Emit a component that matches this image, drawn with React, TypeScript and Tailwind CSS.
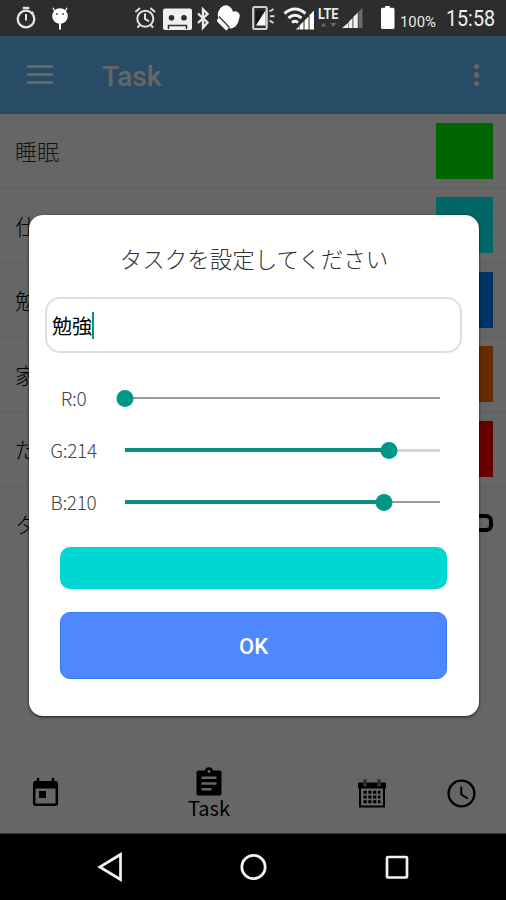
import type { ReactNode } from 'react'

const tasks = [
  { name: '睡眠', color: 'bg-[#00ff00]', text: 'text-[#333333]' },
  { name: '仕事', color: 'bg-[#00ffff]', text: 'text-black' },
  { name: '勉強', color: 'bg-[#0080ff]', text: 'text-black' },
  { name: '家事', color: 'bg-[#ff6600]', text: 'text-black' },
  { name: 'だらだら', color: 'bg-[#ff0000]', text: 'text-black' },
]

const channels = [
  { label: 'R', value: 0, track: 'h-[1.5px] bg-[#999999]' },
  { label: 'G', value: 214, track: 'h-[3px] bg-[#d6d6d6]' },
  { label: 'B', value: 210, track: 'h-[1.5px] bg-[#999999]' },
]

function StatusBar() {
  return (
    <div className="flex h-9 bg-[#2d2d2d]">
      <svg width="506" height="36" viewBox="0 0 506 36" fill="none">
        {/* stopwatch */}
        <g stroke="#e4e4e4">
          <circle cx="26" cy="19" r="8.3" strokeWidth="2.3" />
          <path d="M22.7 8h6.6" strokeWidth="2.4" />
          <path d="M26 14v6.5" strokeWidth="2" />
          <path d="M31.6 12.2l1.8 1.2" strokeWidth="2" />
        </g>
        {/* lollipop robot */}
        <g fill="#fff">
          <circle cx="60" cy="16" r="7.8" />
          <path d="M59 22h2v7.5h-2z" />
          <path d="M55 11.5l-2-3.8M65 11.5l2-3.8" stroke="#fff" strokeWidth="1.3" />
          <circle cx="56.8" cy="14" r="1" fill="#555" />
          <circle cx="63.2" cy="14" r="1" fill="#555" />
        </g>
        {/* alarm */}
        <g stroke="#e0e0e0" strokeWidth="2">
          <circle cx="145.3" cy="18.7" r="8" />
          <path d="M145 13.5v5.4l4 2.4" />
          <path d="M135.4 12l4.6-4M155 12l-4.6-4" />
          <path d="M139.8 25l-2.3 2.7M150.8 25l2.3 2.7" />
        </g>
        {/* recorder */}
        <rect x="163" y="8.5" width="29" height="21.5" rx="2" fill="#f0f0f0" />
        <circle cx="171.5" cy="17.7" r="2.8" fill="#2d2d2d" />
        <circle cx="184" cy="17.7" r="2.8" fill="#2d2d2d" />
        <path d="M168.5 29v-3.5h18v3.5" stroke="#2d2d2d" strokeWidth="1.5" />
        {/* bluetooth */}
        <path d="M198 13.5l9.5 9-4.5 5V9.5l4.500 4.500-9.500 9" stroke="#e8e8e8" strokeWidth="2.4" />
        {/* mitten */}
        <path
          d="M218.500 19Q216.500 13.500 219.500 9.500Q223 4.500 227.500 5.500Q232 7 233 12Q234.500 10.500 237.500 12Q240.500 14 239.500 17.500Q238.500 23 235.500 26.500L231.500 28.500L228 28Z"
          fill="#fff"
        />
        <path d="M219 16.500L229.500 27.500" stroke="#2d2d2d" strokeWidth="1.200" />
        <path d="M218.500 20.500L226.500 28.500" stroke="#fff" strokeWidth="3.200" strokeLinecap="round" />
        {/* phone */}
        <rect x="253.2" y="7" width="13.5" height="22" rx="1.5" stroke="#cfcfcf" strokeWidth="2.2" />
        <path d="M265.5 10.5v15h-9.5z" fill="#fff" />
        <path d="M255.5 25.500V10.500h9z" fill="#161616" />
        <path d="M269.5 11.5l4-2.500M270 16.200h4.500M269.500 20.500l4 2.500" stroke="#d8d8d8" strokeWidth="2" />
        {/* wifi */}
        <g stroke="#f4f4f4" strokeWidth="3">
          <path d="M284.5 13.5q10.500-9 21 0" />
          <path d="M288.5 18q6.500-5.500 13 0" />
          <path d="M292 22.5q3-2.500 6 0" />
        </g>
        <path d="M295 29.5l19.500-20v20z" fill="#2d2d2d" />
        <path d="M296 29.5l3-3v3zM299.500 29.500v-4l4-4v8zM304.500 29.500v-9l4-4v13zM309.500 29.500V15l4.500-4.500v19z" fill="#fff" />
        <text x="318" y="18.5" fill="#e8e8e8" fontSize="15" fontWeight="700" fontFamily="Roboto, sans-serif" textLength="20.5" lengthAdjust="spacingAndGlyphs">LTE</text>
        <path d="M320.5 26.5l3-4 3 4zM330 23h6.500l-3.200 4z" fill="#666" />
        {/* cell signal */}
        <path d="M342 28l6-5v5zM348.500 28v-6l4-4v10zM353.300 28V17l4.500-4.500V28z" fill="#f0f0f0" />
        <path d="M358.500 28V11.500l4-3.500v20z" fill="#6c6c6c" />
        {/* battery */}
        <path d="M383 7.800h2.200V6h4.600v1.800h3.200q1.500 0 1.500 1.500V27.500q0 1.500-1.500 1.500h-10.500q-1.500 0-1.500-1.500V9.300q0-1.500 1.500-1.500z" fill="#fff" />
        <text x="400" y="27" fill="#e8e8e8" fontSize="15.500" fontFamily="Roboto, sans-serif" textLength="36" lengthAdjust="spacingAndGlyphs">100%</text>
        <text x="446" y="25.5" fill="#f0f0f0" fontSize="22.5" fontFamily="Roboto, sans-serif" textLength="49" lengthAdjust="spacingAndGlyphs">15:58</text>
      </svg>
    </div>
  )
}

function Header() {
  return (
    <header className="flex h-[78px] items-center bg-[#66bfff] pl-[27px] pr-[27px] pt-0.5">
      <div className="mb-[3px] flex w-[26px] flex-col gap-[5px]">
        <span className="h-[3px] bg-white" />
        <span className="h-[3px] bg-white" />
        <span className="h-[3px] bg-white" />
      </div>
      <h1 className="ml-[49px] flex-1 pt-0.5 font-[Roboto,sans-serif] text-[28px] font-medium text-white">Task</h1>
      <div className="mb-0.5 flex flex-col gap-[3px]">
        <span className="size-[5.5px] rounded-full bg-white" />
        <span className="size-[5.5px] rounded-full bg-white" />
        <span className="size-[5.5px] rounded-full bg-white" />
      </div>
    </header>
  )
}

function TaskList() {
  return (
    <ul className="h-[641px] bg-[#fefefe] text-[22px] text-black">
      {tasks.map((task) => (
        <li
          key={task.name}
          className="flex h-[74.5px] items-center justify-between border-b border-[#eeeeee] pl-[15px] pr-[13px]"
        >
          <span className={`font-light ${task.text}`}>{task.name}</span>
          <span className={`h-14 w-[57px] ${task.color}`} />
        </li>
      ))}
      <li className="flex h-[74.5px] items-center justify-between border-b border-[#f3f3f3] pl-[15px] pr-[13px]">
        <span className="font-light">タスクを追加</span>
        <span className="h-[18px] w-14 rounded-[7px] border-4 border-black" />
      </li>
    </ul>
  )
}

function Tab({ className, label, children }: { className: string; label?: string; children: ReactNode }) {
  return (
    <div className={`flex flex-col items-center ${className}`}>
      {children}
      {label && <span className="text-[20px] leading-6 text-black">{label}</span>}
    </div>
  )
}

function TabBar() {
  return (
    <nav className="flex h-[79px] items-start border-b border-[#888888] bg-white">
      <Tab className="ml-8 pt-[23px]">
        <svg width="27" height="29" viewBox="0 0 27 29">
          <path d="M6 0v5M21 0v5" stroke="#000" strokeWidth="2.5" />
          <rect x="2.2" y="4.2" width="22.6" height="22.6" rx="1.5" fill="none" stroke="#000" strokeWidth="2.5" />
          <path d="M2 4h23v6.500H2zM7 13h7v7H7z" />
        </svg>
      </Tab>
      <Tab className="ml-[127px] w-[46px] pt-3" label="Task">
        <svg width="26" height="29" viewBox="0 0 26 29">
          <rect x="0.5" y="3.5" width="25" height="25" rx="2" />
          <circle cx="13" cy="4.2" r="4" />
          <circle cx="13" cy="4.5" r="1.4" fill="#fff" />
          <path d="M5.5 10.800h15M5.500 16.600h15M5.500 22.200h10" stroke="#fff" strokeWidth="2.5" />
        </svg>
      </Tab>
      <Tab className="ml-[126px] pt-6">
        <svg width="28" height="29" viewBox="0 0 28 29">
          <path d="M0 3.500h28v6H0z" />
          <rect x="2" y="8" width="24" height="19.5" fill="none" stroke="#000" strokeWidth="2" />
          <path
            d="M5.500 13.200h17M5.500 18h17M5.500 22.800h17"
            stroke="#000"
            strokeWidth="3"
            strokeDasharray="3.2 1.6"
          />
          <path d="M7 1v5M21 1v5" stroke="#888" strokeWidth="3.5" strokeLinecap="round" />
          <path d="M7 2v3M21 2v3" stroke="#333" strokeWidth="1.2" />
        </svg>
      </Tab>
      <Tab className="ml-[61px] pt-6">
        <svg width="29" height="29" viewBox="0 0 29 29" fill="none" stroke="#000" strokeWidth="2.4">
          <circle cx="14.5" cy="14.5" r="12.9" />
          <path d="M14.300 7.500v8l6.500 4" strokeWidth="2" />
        </svg>
      </Tab>
    </nav>
  )
}

function SystemNav() {
  return (
    <div className="flex h-[66px] items-center bg-black pl-[97px]">
      <svg width="314" height="30" viewBox="0 0 314 30" fill="none" stroke="#f2f2f2" strokeWidth="2.7">
        <path d="M23.500 2.500v25L2.800 15z" />
        <circle cx="156.5" cy="15" r="11.7" />
        <rect x="290" y="5" width="20" height="20.5" rx="1" />
      </svg>
    </div>
  )
}

function ColorSlider({ label, value, track }: { label: string; value: number; track: string }) {
  const position = `${(value / 255) * 100}%`

  return (
    <div className="flex h-[52px] items-center">
      <span className="w-[57px] text-center text-[19px] font-light leading-6 tracking-[-0.3px] text-[#444444] [font-feature-settings:'zero']">
        {`${label}:${value}`}
      </span>
      <div className="relative ml-[22.5px] flex h-[17px] w-[315px] items-center">
        <div className={`w-full ${track}`} />
        <div className="absolute left-0 top-[6.5px] h-1 bg-[#0b8f80]" style={{ width: position }} />
        <div
          className="absolute top-0 size-[17px] -translate-x-1/2 rounded-full bg-[#009688]"
          style={{ left: position }}
        />
      </div>
    </div>
  )
}

function TaskDialog() {
  return (
    <div className="flex h-[501px] w-[450px] flex-col rounded-[14px] bg-white px-4 pt-[25px] shadow-[0_1px_3px_rgba(0,0,0,0.7)]">
      <h2 className="text-center text-[22.5px] font-light leading-9 text-[#333333]">タスクを設定してください</h2>
      <div className="mt-[21px] flex h-14 w-[417px] items-center rounded-[15px] border-2 border-[#dedede] pl-[5px] pt-px">
        <span className="text-[20px] text-black">勉強</span>
        <span className="h-[27px] w-0.5 bg-[#009688]" />
      </div>
      <div className="mt-[19px]">
        {channels.map((channel) => (
          <ColorSlider key={channel.label} {...channel} />
        ))}
      </div>
      <div className="ml-[15px] mt-[19px] h-[42px] w-[387px] shrink-0 rounded-[10px] bg-[rgb(0,214,210)]" />
      <button className="ml-[15px] mt-[23px] h-[67px] w-[387px] shrink-0 rounded-[10px] border border-[#3478f6] bg-[#4f87ff] pt-0.5 font-[Roboto,sans-serif] text-[22px] font-medium text-white">
        OK
      </button>
    </div>
  )
}

export default function App() {
  return (
    <div className="relative h-[900px] w-[506px] overflow-hidden font-['Noto_Sans_CJK_JP',sans-serif]">
      <StatusBar />
      <Header />
      <TaskList />
      <TabBar />
      <SystemNav />
      <div className="absolute inset-x-0 top-9 flex h-[798px] items-start bg-black/60 pl-[29px] pt-[179px]">
        <TaskDialog />
      </div>
    </div>
  )
}
